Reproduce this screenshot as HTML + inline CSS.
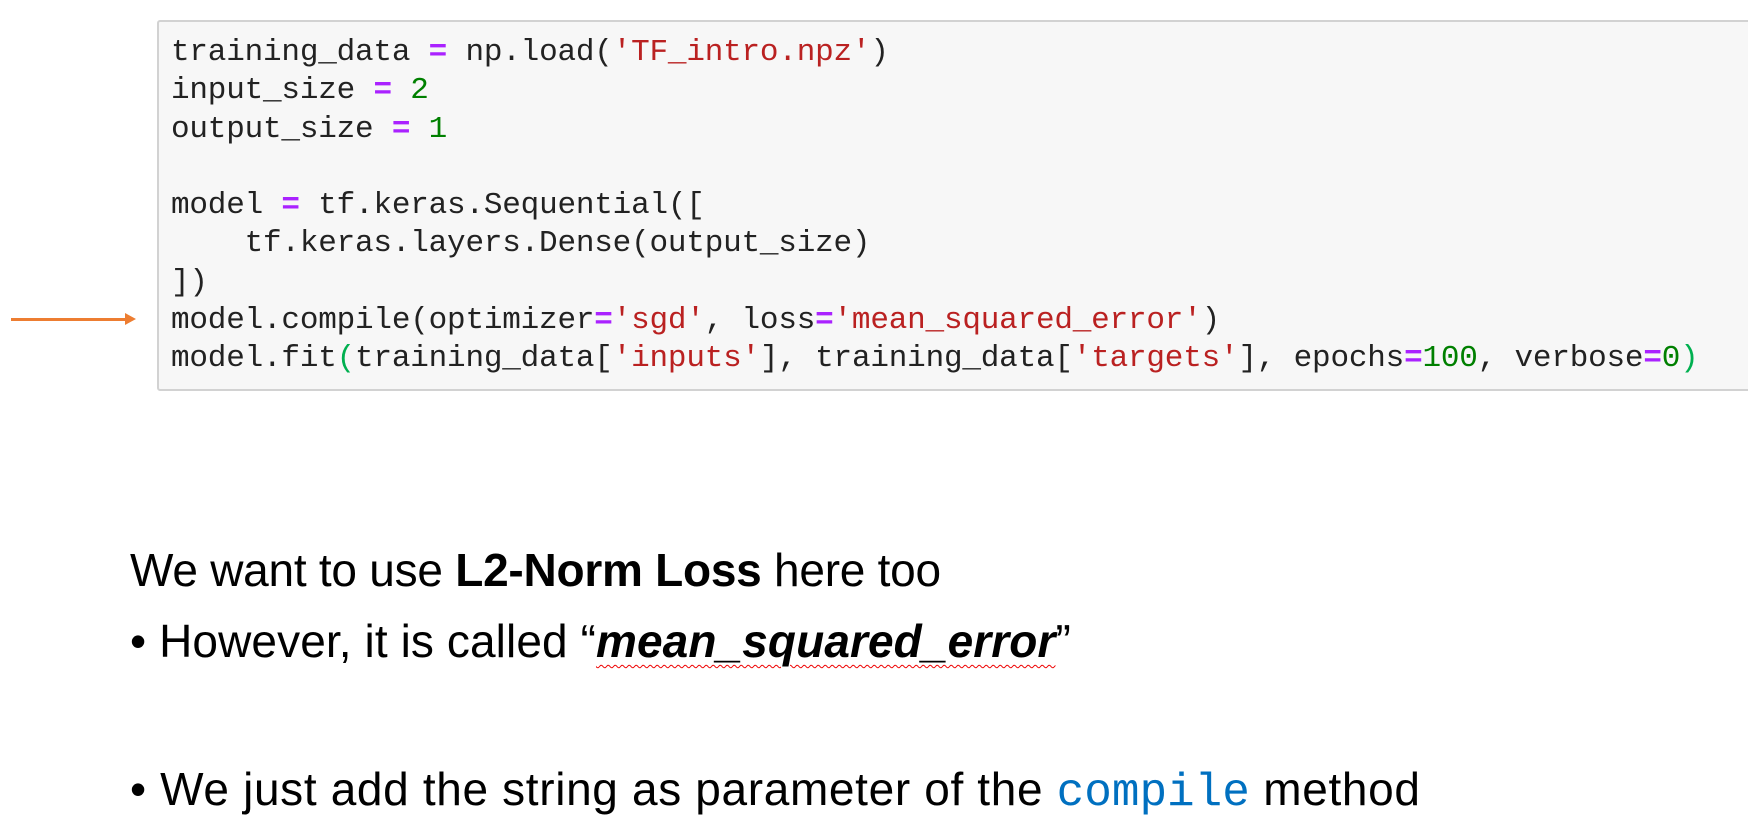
<!DOCTYPE html>
<html><head><meta charset="utf-8"><style>
html,body{margin:0;padding:0;background:#fff;width:1748px;height:838px;overflow:hidden;position:relative}
.box{position:absolute;left:157px;top:20px;width:1600px;height:367px;background:#f7f7f7;border:2px solid #d2d2d2;border-radius:3px}
.code{position:absolute;left:171px;top:34px;font-family:"Liberation Mono",monospace;font-size:31px;line-height:38.3px;color:#222;white-space:pre;letter-spacing:-0.2px}
.o{color:#aa22ff;font-weight:bold}.s{color:#ba2121}.n{color:#008000}.g{color:#00b050}
.arrow{position:absolute;left:11px;top:318px;width:115px;height:3px;background:#ed7d31}
.arrow:after{content:"";position:absolute;right:-10px;top:-5px;border-left:11px solid #ed7d31;border-top:6.5px solid transparent;border-bottom:6.5px solid transparent}
.t{position:absolute;font-family:"Liberation Sans",sans-serif;font-size:46px;color:#000;white-space:nowrap;letter-spacing:-0.25px}
.sq{text-decoration:underline wavy #e00;text-decoration-thickness:1px;text-underline-offset:7px}
.c{font-family:"Liberation Mono",monospace;color:#0070c0;font-size:46px;letter-spacing:0}
</style></head><body>
<div class="box"></div>
<div class="arrow"></div>
<div class="code">training_data <span class="o">=</span> np.load(<span class="s">'TF_intro.npz'</span>)
input_size <span class="o">=</span> <span class="n">2</span>
output_size <span class="o">=</span> <span class="n">1</span>

model <span class="o">=</span> tf.keras.Sequential([
    tf.keras.layers.Dense(output_size)
])
model.compile(optimizer<span class="o">=</span><span class="s">'sgd'</span>, loss<span class="o">=</span><span class="s">'mean_squared_error'</span>)
model.fit<span class="g">(</span>training_data[<span class="s">'inputs'</span>], training_data[<span class="s">'targets'</span>], epochs<span class="o">=</span><span class="n">100</span>, verbose<span class="o">=</span><span class="n">0</span><span class="g">)</span></div>
<div class="t" style="left:130px;top:543px">We want to use <b>L2-Norm Loss</b> here too</div>
<div class="t" style="left:130px;top:614px;letter-spacing:0.1px">• However, it is called “<b><i class="sq">mean_squared_error</i></b>”</div>
<div class="t" style="left:130px;top:762px;letter-spacing:0.65px">• We just add the string as parameter of the <span class="c">compile</span> method</div>
</body></html>
